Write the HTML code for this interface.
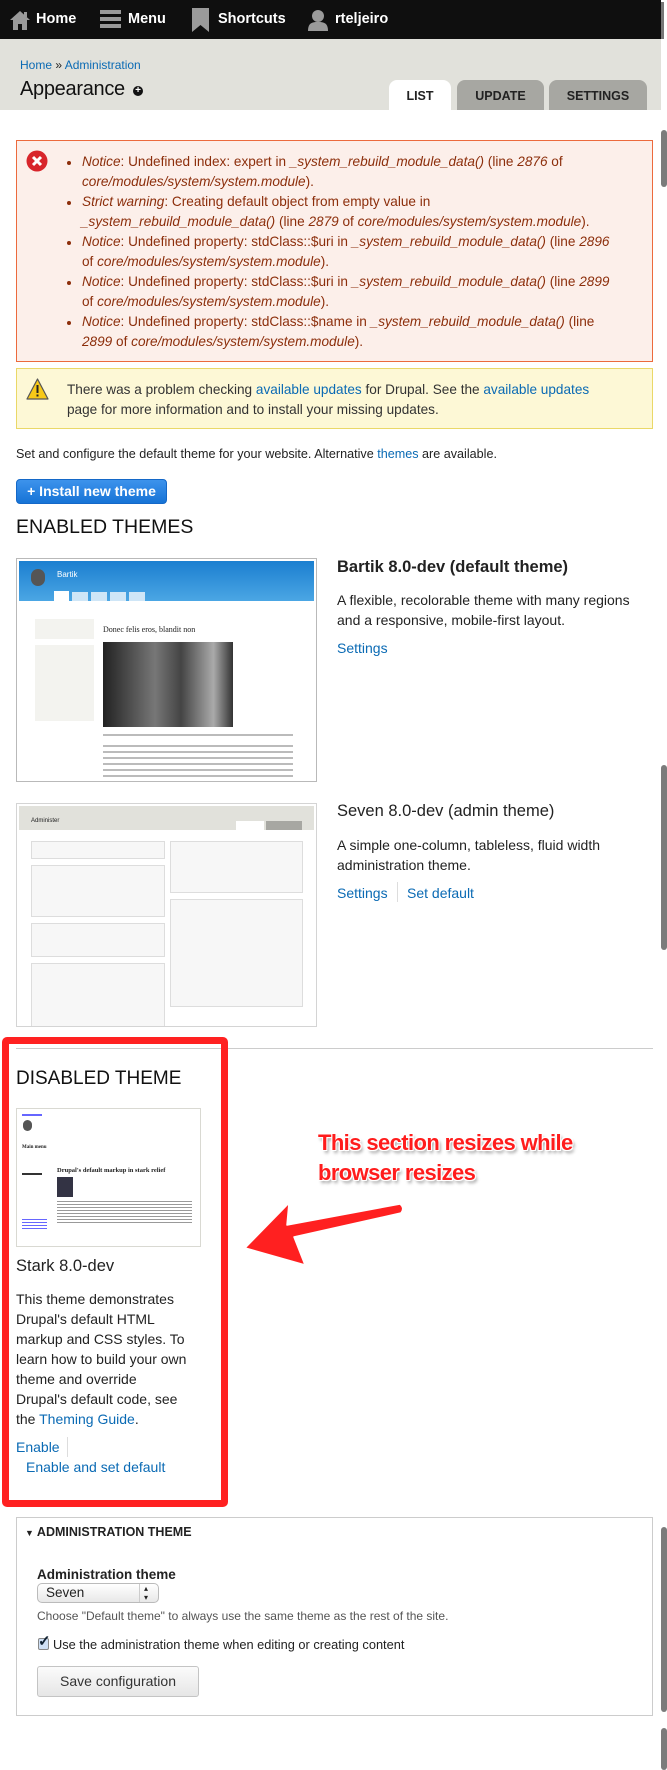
<!DOCTYPE html>
<html><head><meta charset="utf-8">
<style>
*{margin:0;padding:0;box-sizing:border-box}
body{width:667px;height:1770px;position:relative;background:#fff;font-family:"Liberation Sans",sans-serif;color:#222;overflow:hidden}
.a{position:absolute;white-space:nowrap}
a,.lk{color:#0a6ab4;text-decoration:none}
#tb{position:absolute;left:0;top:0;width:661px;height:39px;background:#0f0f0f}
#tb .t{position:absolute;top:11px;color:#fff;font-weight:bold;font-size:14.5px}
#hd{position:absolute;left:0;top:39px;width:661px;height:71px;background:#e1e1db}
.tab{position:absolute;top:80px;height:30px;border-radius:8px 8px 0 0;background:#a7a7a2;font-size:12.5px;font-weight:bold;text-align:center;line-height:33px;color:#222}
.err{position:absolute;left:16px;top:140px;width:637px;height:222px;background:#fcefea;border:1px solid #ec6a3d}
.err .ln{position:absolute;left:65px;font-size:13.6px;color:#8c2e0b;white-space:nowrap}
.err i{font-style:italic}
.bul{position:absolute;left:50px;width:4px;height:4px;border-radius:2px;background:#8c2e0b}
.warn{position:absolute;left:16px;top:368px;width:637px;height:61px;background:#fdf8d6;border:1px solid #ead868}
.sb{position:absolute;left:661px;width:6px;background:#7b7b7b;border-radius:3px}
</style></head><body>
<div id="tb">
 <svg class="a" style="left:9px;top:9px" width="22" height="22" viewBox="0 0 22 22"><path d="M11 2 L21 11 L18 11 L18 21 L13 21 L13 15 L9 15 L9 21 L4 21 L4 11 L1 11 Z" fill="#9a9a9a"/><rect x="15" y="3" width="3" height="5" fill="#9a9a9a"/></svg>
 <span class="t" style="left:36px">Home</span>
 <div class="a" style="left:100px;top:10px;width:21px;height:4px;background:#9a9a9a"></div>
 <div class="a" style="left:100px;top:17px;width:21px;height:4px;background:#9a9a9a"></div>
 <div class="a" style="left:100px;top:24px;width:21px;height:4px;background:#9a9a9a"></div>
 <span class="t" style="left:128px">Menu</span>
 <svg class="a" style="left:192px;top:8px" width="17" height="24" viewBox="0 0 17 24"><path d="M0 0 H17 V24 L8.5 17 L0 24 Z" fill="#9a9a9a"/></svg>
 <span class="t" style="left:218px">Shortcuts</span>
 <svg class="a" style="left:307px;top:9px" width="22" height="22" viewBox="0 0 22 22"><circle cx="11" cy="7" r="6" fill="#9a9a9a"/><path d="M1 22 C1 14 5 13 11 13 C17 13 21 14 21 22 Z" fill="#9a9a9a"/></svg>
 <span class="t" style="left:335px">rteljeiro</span>
</div>
<div id="hd"></div>
<div class="a" style="left:20px;top:58px;font-size:12px"><span class="lk">Home</span> » <span class="lk">Administration</span></div>
<div class="a" style="left:20px;top:78px;font-size:20px;color:#111;letter-spacing:-0.3px">Appearance</div>
<div class="a" style="left:133px;top:86px;width:10px;height:10px;border-radius:5px;background:#111;color:#fff;font-size:10px;line-height:10px;text-align:center;font-weight:bold">+</div>
<div class="tab" style="left:389px;width:62px;background:#fff">LIST</div>
<div class="tab" style="left:457px;width:87px">UPDATE</div>
<div class="tab" style="left:549px;width:98px">SETTINGS</div>

<div class="err">
 <svg class="a" style="left:9px;top:9px" width="22" height="22" viewBox="0 0 22 22"><circle cx="11" cy="11" r="10.5" fill="#d8252b"/><path d="M7 7 L15 15 M15 7 L7 15" stroke="#fff" stroke-width="3"/></svg>
 <div class="bul" style="top:20px"></div><div class="ln" style="top:13px"><i>Notice</i>: Undefined index: expert in <i>_system_rebuild_module_data()</i> (line <i>2876</i> of</div>
 <div class="ln" style="top:33px"><i>core/modules/system/system.module</i>).</div>
 <div class="bul" style="top:60px"></div><div class="ln" style="top:53px"><i>Strict warning</i>: Creating default object from empty value in</div>
 <div class="ln" style="top:73px;left:64px"><i>_system_rebuild_module_data()</i> (line <i>2879</i> of <i>core/modules/system/system.module</i>).</div>
 <div class="bul" style="top:100px"></div><div class="ln" style="top:93px"><i>Notice</i>: Undefined property: stdClass::$uri in <i>_system_rebuild_module_data()</i> (line <i>2896</i></div>
 <div class="ln" style="top:113px">of <i>core/modules/system/system.module</i>).</div>
 <div class="bul" style="top:140px"></div><div class="ln" style="top:133px"><i>Notice</i>: Undefined property: stdClass::$uri in <i>_system_rebuild_module_data()</i> (line <i>2899</i></div>
 <div class="ln" style="top:153px">of <i>core/modules/system/system.module</i>).</div>
 <div class="bul" style="top:180px"></div><div class="ln" style="top:173px"><i>Notice</i>: Undefined property: stdClass::$name in <i>_system_rebuild_module_data()</i> (line</div>
 <div class="ln" style="top:193px"><i>2899</i> of <i>core/modules/system/system.module</i>).</div>
</div>

<div class="warn">
 <svg class="a" style="left:9px;top:9px" width="23" height="22" viewBox="0 0 23 22"><path d="M11.5 1 L22 21 L1 21 Z" fill="#f7c918" stroke="#555" stroke-width="1.2" stroke-linejoin="round"/><rect x="10.5" y="7" width="2" height="8" fill="#222"/><rect x="10.5" y="16.5" width="2" height="2" fill="#222"/></svg>
 <div class="a" style="left:50px;top:13px;font-size:13.6px;color:#333">There was a problem checking <span class="lk">available updates</span> for Drupal. See the <span class="lk">available updates</span></div>
 <div class="a" style="left:50px;top:33px;font-size:13.6px;color:#333">page for more information and to install your missing updates.</div>
</div>

<div class="a" style="left:16px;top:447px;font-size:12.6px;color:#222">Set and configure the default theme for your website. Alternative <span class="lk">themes</span> are available.</div>
<div class="a" style="left:16px;top:479px;width:151px;height:25px;border-radius:4px;background:linear-gradient(#3d93ec,#1673d6);border:1px solid #1468c8;color:#fff;font-size:14px;font-weight:bold;text-align:center;line-height:23px">+ Install new theme</div>
<div class="a" style="left:16px;top:516px;font-size:19.5px;color:#111">ENABLED THEMES</div>

<div class="a" style="left:16px;top:558px;width:301px;height:224px;border:1px solid #b9b9b9;overflow:hidden;background:#fff">
 <div class="a" style="left:2px;top:2px;width:295px;height:40px;background:linear-gradient(#1b7fd0,#4ba6e4)"></div>
 <div class="a" style="left:14px;top:10px;width:14px;height:17px;border-radius:7px;background:#555"></div>
 <div class="a" style="left:40px;top:11px;color:#fff;font-size:8px">Bartik</div>
 <div class="a" style="left:37px;top:32px;width:15px;height:10px;background:#fff"></div>
 <div class="a" style="left:55px;top:33px;width:16px;height:9px;background:#cfe6f7"></div>
 <div class="a" style="left:74px;top:33px;width:16px;height:9px;background:#cfe6f7"></div>
 <div class="a" style="left:93px;top:33px;width:16px;height:9px;background:#cfe6f7"></div>
 <div class="a" style="left:112px;top:33px;width:16px;height:9px;background:#cfe6f7"></div>
 <div class="a" style="left:18px;top:60px;width:59px;height:20px;background:#f3f3ef"></div>
 <div class="a" style="left:18px;top:86px;width:59px;height:76px;background:#f3f3ef"></div>
 <div class="a" style="left:86px;top:66px;font-family:'Liberation Serif',serif;font-size:8px">Donec felis eros, blandit non</div>
 <div class="a" style="left:86px;top:83px;width:130px;height:85px;background:linear-gradient(90deg,#222,#777 40%,#444 60%,#aaa 85%,#333)"></div>
 <div class="a" style="left:86px;top:175px;width:190px;height:2px;background:#bbb"></div>
 <div class="a" style="left:86px;top:186px;width:190px;height:2px;background:#bbb"></div>
 <div class="a" style="left:86px;top:192px;width:190px;height:2px;background:#bbb"></div>
 <div class="a" style="left:86px;top:198px;width:190px;height:2px;background:#bbb"></div>
 <div class="a" style="left:86px;top:204px;width:190px;height:2px;background:#bbb"></div>
 <div class="a" style="left:86px;top:210px;width:190px;height:2px;background:#bbb"></div>
 <div class="a" style="left:86px;top:216px;width:190px;height:2px;background:#bbb"></div>
</div>
<div class="a" style="left:337px;top:558px;font-size:16.5px;font-weight:bold;color:#222">Bartik 8.0-dev (default theme)</div>
<div class="a" style="left:337px;top:590px;font-size:14px;line-height:20px;color:#222">A flexible, recolorable theme with many regions<br>and a responsive, mobile-first layout.</div>
<div class="a lk" style="left:337px;top:640px;font-size:14px">Settings</div>

<div class="a" style="left:16px;top:803px;width:301px;height:224px;border:1px solid #d4d4d4;overflow:hidden;background:#fff">
 <div class="a" style="left:2px;top:2px;width:295px;height:24px;background:#e1e1db"></div>
 <div class="a" style="left:14px;top:14px;font-size:6px">Administer</div>
 <div class="a" style="left:219px;top:17px;width:28px;height:9px;background:#fff"></div>
 <div class="a" style="left:249px;top:17px;width:36px;height:9px;background:#a7a7a2"></div>
 <div class="a" style="left:14px;top:37px;width:134px;height:18px;border:1px solid #ddd;background:#f7f7f7"></div>
 <div class="a" style="left:14px;top:61px;width:134px;height:52px;border:1px solid #ddd;background:#f7f7f7"></div>
 <div class="a" style="left:14px;top:119px;width:134px;height:34px;border:1px solid #ddd;background:#f7f7f7"></div>
 <div class="a" style="left:14px;top:159px;width:134px;height:70px;border:1px solid #ddd;background:#f7f7f7"></div>
 <div class="a" style="left:153px;top:37px;width:133px;height:52px;border:1px solid #ddd;background:#f7f7f7"></div>
 <div class="a" style="left:153px;top:95px;width:133px;height:108px;border:1px solid #ddd;background:#f7f7f7"></div>
</div>
<div class="a" style="left:337px;top:802px;font-size:16.5px;color:#222">Seven 8.0-dev (admin theme)</div>
<div class="a" style="left:337px;top:835px;font-size:14px;line-height:20px;color:#222">A simple one-column, tableless, fluid width<br>administration theme.</div>
<div class="a lk" style="left:337px;top:885px;font-size:14px">Settings</div>
<div class="a" style="left:397px;top:882px;width:1px;height:20px;background:#ddd"></div>
<div class="a lk" style="left:407px;top:885px;font-size:14px">Set default</div>
<div class="a" style="left:16px;top:1048px;width:637px;height:1px;background:#ccc"></div>

<div class="a" style="left:16px;top:1068px;font-size:19px;color:#111">DISABLED THEME</div>
<div class="a" style="left:16px;top:1108px;width:185px;height:139px;border:1px solid #d9d9d2;background:#fff;overflow:hidden">
 <div class="a" style="left:5px;top:5px;width:20px;height:2px;background:#66f"></div>
 <div class="a" style="left:6px;top:11px;width:9px;height:11px;border-radius:5px;background:#555"></div>
 <div class="a" style="left:5px;top:36px;font-family:'Liberation Serif',serif;font-size:5px;font-weight:bold">Main menu</div>
 <div class="a" style="left:40px;top:58px;font-family:'Liberation Serif',serif;font-size:6.5px;font-weight:bold">Drupal's default markup in stark relief</div>
 <div class="a" style="left:40px;top:68px;width:16px;height:20px;background:#334"></div>
 <div class="a" style="left:40px;top:92px;width:135px;height:22px;background:repeating-linear-gradient(#999 0 1px,#fff 1px 3px)"></div>
 <div class="a" style="left:5px;top:64px;width:20px;height:2px;background:#333"></div>
 <div class="a" style="left:5px;top:110px;width:25px;height:10px;background:repeating-linear-gradient(#66f 0 1px,#fff 1px 3px)"></div>
</div>
<div class="a" style="left:16px;top:1257px;font-size:16.5px;color:#222">Stark 8.0-dev</div>
<div class="a" style="left:16px;top:1289px;font-size:14px;line-height:20px;color:#222">This theme demonstrates<br>Drupal's default HTML<br>markup and CSS styles. To<br>learn how to build your own<br>theme and override<br>Drupal's default code, see<br>the <span class="lk">Theming Guide</span>.</div>
<div class="a lk" style="left:16px;top:1439px;font-size:14px">Enable</div>
<div class="a" style="left:67px;top:1437px;width:1px;height:20px;background:#ddd"></div>
<div class="a lk" style="left:26px;top:1459px;font-size:14px">Enable and set default</div>

<div class="a" style="left:2px;top:1037px;width:226px;height:470px;border:7px solid #ff2121;border-radius:5px"></div>
<div class="a" style="left:318px;top:1128px;font-size:22px;font-weight:bold;color:#ff1c1c;letter-spacing:-0.6px;line-height:30px;text-shadow:0 0 2px #fff,1px 1px 0 #fff,-1px -1px 0 #fff,1px -1px 0 #fff,-1px 1px 0 #fff,2px 3px 3px rgba(0,0,0,.4)">This section resizes while<br>browser resizes</div>
<svg class="a" style="left:240px;top:1195px" width="170" height="75" viewBox="240 1195 170 75"><path d="M245 1248 L289 1203 L287 1225 L400 1204 Q405 1208 401 1213 L294 1237 L305 1265 Z" fill="#ff2020" stroke="#fff" stroke-width="1.5" stroke-linejoin="round"/></svg>

<div class="a" style="left:16px;top:1517px;width:637px;height:199px;border:1px solid #ccc"></div>
<div class="a" style="left:25px;top:1525px;font-size:12.5px;font-weight:bold;color:#222"><span style="font-size:9px">▼</span> ADMINISTRATION THEME</div>
<div class="a" style="left:37px;top:1567px;font-size:13.5px;font-weight:bold;color:#222">Administration theme</div>
<div class="a" style="left:37px;top:1583px;width:122px;height:20px;border:1px solid #bbb;border-radius:5px;background:linear-gradient(#fff,#e8e8e8);font-size:13.5px;line-height:18px;padding-left:8px">Seven<span class="a" style="left:101px;top:0;width:1px;height:18px;background:#ccc"></span><span class="a" style="left:106px;top:0;font-size:8px;line-height:9px">▴<br>▾</span></div>
<div class="a" style="left:37px;top:1609px;font-size:12px;color:#555">Choose "Default theme" to always use the same theme as the rest of the site.</div>
<div class="a" style="left:38px;top:1638px;width:11px;height:12px;border:1px solid #888;border-radius:2px;background:#cfe0f5"></div>
<div class="a" style="left:38px;top:1632px;font-size:15px;color:#123;font-weight:bold">✓</div>
<div class="a" style="left:53px;top:1637px;font-size:12.8px;color:#222">Use the administration theme when editing or creating content</div>
<div class="a" style="left:37px;top:1666px;width:162px;height:31px;border:1px solid #c4c4c4;border-radius:3px;background:linear-gradient(#fbfbfb,#e6e6e6);font-size:14px;text-align:center;line-height:29px;color:#333">Save configuration</div>

<div class="sb" style="top:130px;height:57px"></div>
<div class="sb" style="top:765px;height:185px"></div>
<div class="sb" style="top:1527px;height:185px"></div>
<div class="sb" style="top:1728px;height:42px"></div>
<div class="a" style="left:661px;top:2px;width:3px;height:37px;background:#777"></div>
</body></html>
